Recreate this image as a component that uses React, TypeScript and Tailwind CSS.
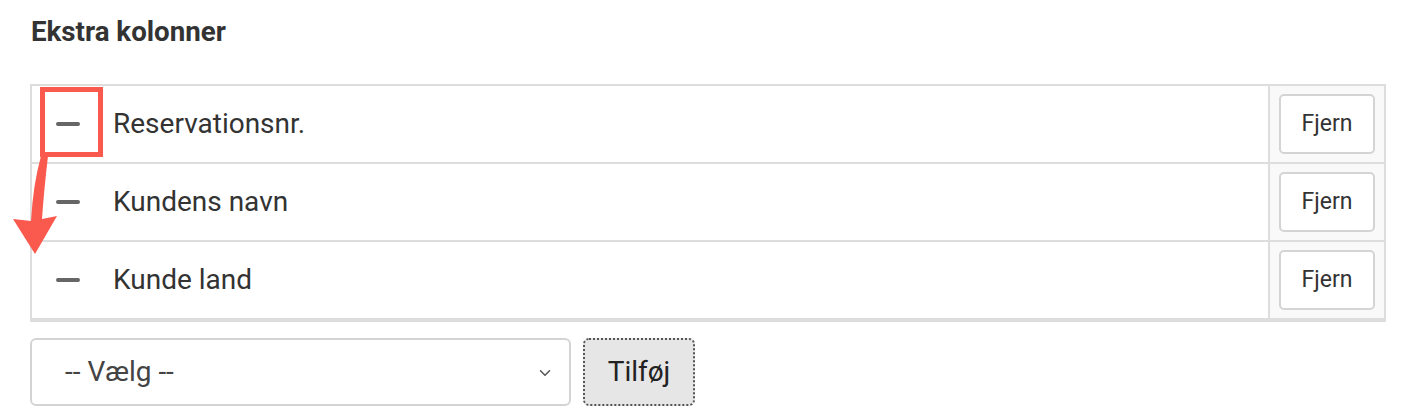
import { ChevronDown } from "lucide-react";

const rows = ["Reservationsnr.", "Kundens navn", "Kunde land"];

function Row({ label, first }: { label: string; first: boolean }) {
  return (
    <div
      className={
        first
          ? "flex h-[76px]"
          : "flex h-[78px] border-t-2 border-[#dddddd]"
      }
    >
      <div className="flex flex-1 items-center pl-[24px] bg-white">
        <span className="block w-[24px] h-[4px] rounded-full bg-[#666666]" />
        <span className="ml-[33px] text-[28px] text-[#333333]">{label}</span>
      </div>
      <div className="flex w-[116px] items-center justify-start pl-[9px] border-l-2 border-[#dddddd] bg-[#f9f9f9]">
        <button className="w-[96px] h-[60px] rounded-[5px] border-2 border-[#d4d4d4] bg-white text-[23px] text-[#333333]">
          Fjern
        </button>
      </div>
    </div>
  );
}

export default function App() {
  return (
    <div
      className="relative w-[1408px] h-[418px] bg-white px-[30px] pt-[14px]"
      style={{ fontFamily: "Roboto, 'Liberation Sans', sans-serif" }}
    >
      <h2 className="ml-[1px] text-[27.7px] leading-[36px] font-bold text-[#333333]">
        Ekstra kolonner
      </h2>

      <div className="mt-[34px] w-[1356px] border-x-2 border-t-2 border-b-4 border-[#dddddd]">
        {rows.map((r, i) => (
          <Row key={r} label={r} first={i === 0} />
        ))}
      </div>

      <div className="mt-[16px] flex gap-[12px]">
        <div className="relative flex w-[541px] h-[68px] items-center rounded-[6px] border-2 border-[#d4d4d4] bg-white pl-[33px]">
          <span className="text-[28px] text-[#444444]">-- Vælg --</span>
          <ChevronDown className="absolute right-[15px] top-[24px] w-[18px] h-[18px] text-[#555555]" strokeWidth={2} />
        </div>
        <button className="w-[112px] h-[68px] rounded-[6px] border-2 border-dotted border-[#555555] bg-[#e6e6e6] text-[28px] text-[#222222]">
          Tilføj
        </button>
      </div>

      {/* annotation overlay */}
      <div className="absolute left-[40px] top-[87px] w-[63px] h-[70px] border-[5px] border-[#fa5a4d]" />
      <svg className="absolute left-0 top-0" width="120" height="270" viewBox="0 0 120 270">
        <path
          d="M41 156 L48 156 Q44 190 42 219 L57 216 L35 254 L13 219 L31 221 Q33 185 41 156 Z"
          fill="#fa5a4d"
        />
      </svg>
    </div>
  );
}
